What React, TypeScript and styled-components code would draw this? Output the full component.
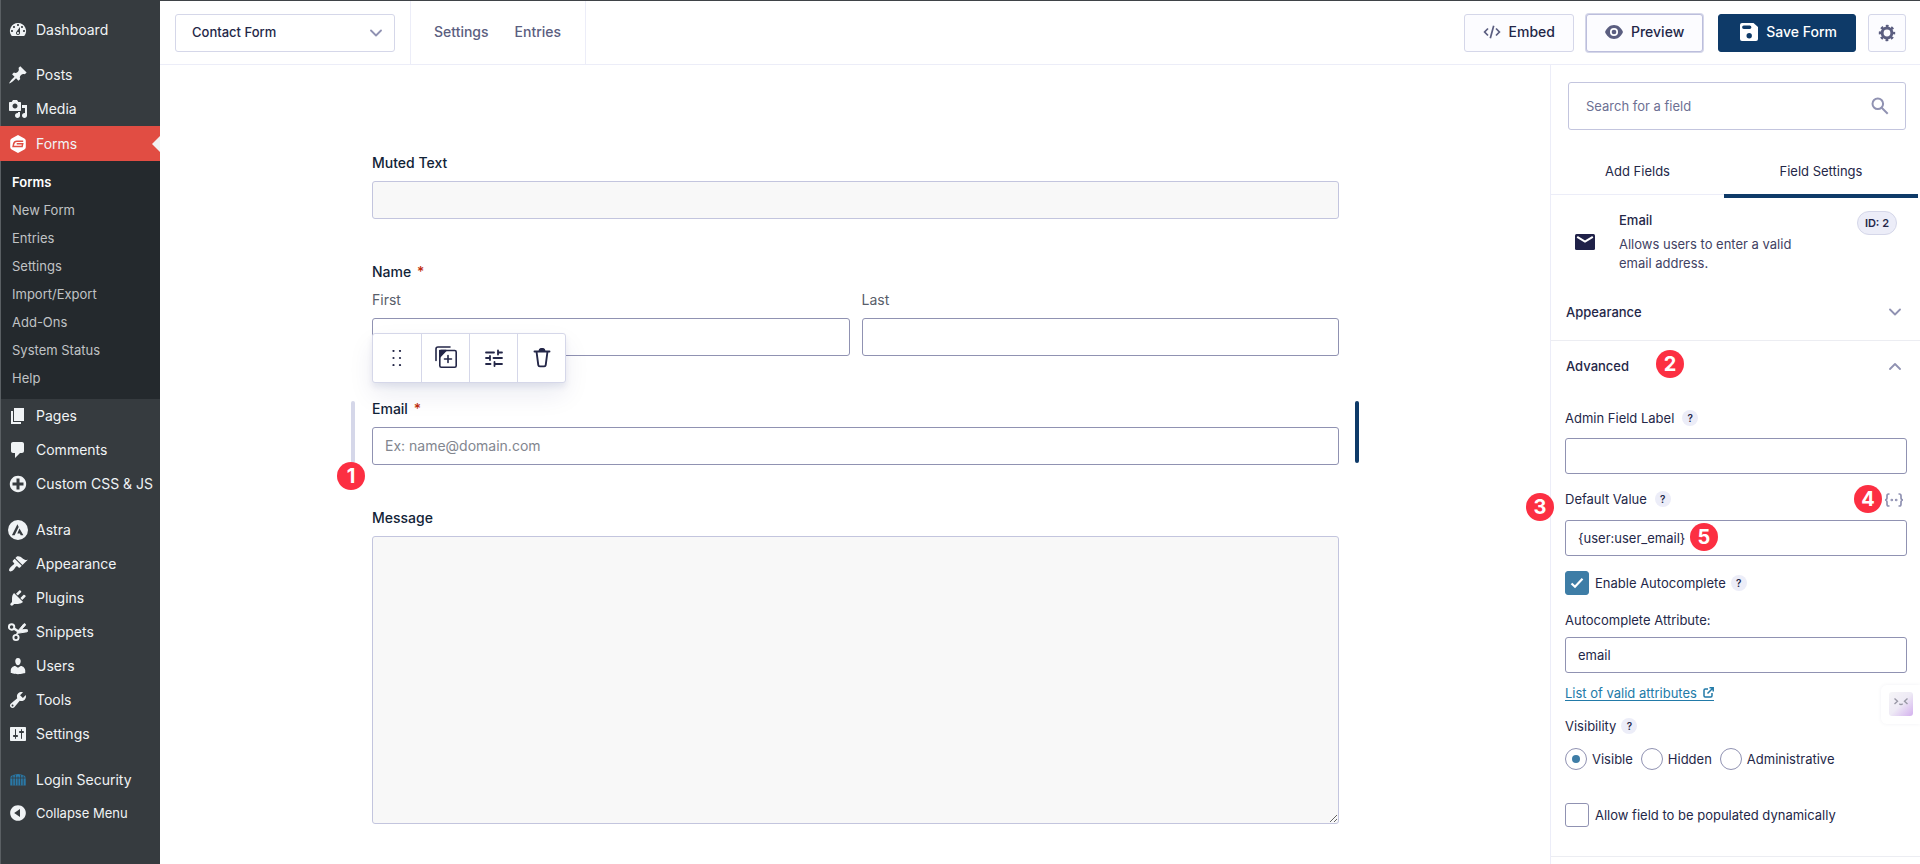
import React from 'react';
import styled, { createGlobalStyle, css } from 'styled-components';

const GlobalStyle = createGlobalStyle`
  *, *::before, *::after { box-sizing: border-box; }
  html, body { margin: 0; }
  body {
    background: #fff;
    color: #242748;
    font: 13px/20px Inter, "Liberation Sans", sans-serif;
  }
  button, input, select, textarea { font: inherit; color: inherit; margin: 0; }
  a { color: inherit; text-decoration: none; }
  h2, p, ul, fieldset { margin: 0; padding: 0; border: 0; }
  ul { list-style: none; }
  svg { display: block; flex: none; }
`;

const Shell = styled.div`
  display: grid;
  grid-template-columns: 160px minmax(0, 1fr);
  min-height: 100vh;
`;

/* ---------- admin menu ---------- */

const Menu = styled.nav`
  background: #363b3f;
  border-left: 1px solid #5a5f63;
  padding-top: 13px;
  color: #f0f3f5;
`;

const MenuGroup = styled.ul`
  margin-bottom: 12px;
  &:first-child { margin-bottom: 11px; }
`;

const MenuLink = styled.a<{ $active?: boolean }>`
  position: relative;
  display: flex;
  align-items: center;
  gap: 8px;
  height: 34px;
  padding-left: 7px;
  font-size: 14px;
  white-space: nowrap;
  ${(p) =>
    p.$active &&
    css`
      height: 35px;
      margin-left: -1px;
      padding-left: 8px;
      background: #e14d43;
      &::after {
        content: '';
        position: absolute;
        right: 0;
        top: 10px;
        border: 8px solid transparent;
        border-left: 0;
        border-right-color: #f1f1f1;
      }
    `}
`;

const CollapseButton = styled.button`
  display: flex;
  align-items: center;
  gap: 8px;
  height: 32px;
  padding: 0 0 0 7px;
  border: 0;
  background: none;
`;

const SubMenu = styled.ul`
  padding: 7px 0 7px 11px;
  background: #24292d;
`;

const SubLink = styled.a<{ $current?: boolean }>`
  display: block;
  line-height: 28px;
  color: ${(p) => (p.$current ? '#fff' : '#c0c3c5')};
  font-weight: ${(p) => (p.$current ? 600 : 400)};
`;

/* ---------- top bar ---------- */

const Main = styled.div`
  display: flex;
  flex-direction: column;
  min-width: 0;
`;

const TopBar = styled.header`
  display: flex;
  align-items: center;
  height: 65px;
  border-top: 1px solid #3f4347;
  border-bottom: 1px solid #ecedf8;
  padding: 0 14px 0 15px;
`;

const FormPicker = styled.div`
  position: relative;
  width: 220px;
  svg {
    position: absolute;
    right: 13px;
    top: 13px;
    pointer-events: none;
  }
`;

const PickerSelect = styled.select`
  appearance: none;
  display: block;
  width: 100%;
  height: 38px;
  padding: 0 32px 1px 16px;
  border: 1px solid #d5d7e9;
  border-radius: 3px;
  background: #fff;
  font-weight: 500;
`;

const TopLinks = styled.nav`
  display: flex;
  align-items: center;
  gap: 26px;
  align-self: stretch;
  margin-left: 15px;
  padding: 0 24px 1px 23px;
  border: solid #ecedf8;
  border-width: 0 1px;
  color: #5b5e80;
  font-size: 14px;
  font-weight: 500;
`;

const Actions = styled.div`
  display: flex;
  gap: 12px;
  margin-left: auto;
`;

const ActionButton = styled.button<{ $kind?: 'focus' | 'primary' }>`
  display: flex;
  align-items: center;
  justify-content: center;
  gap: 8px;
  min-width: 38px;
  height: 38px;
  padding: 0 18px 1px;
  border: 1px solid #d5d7e9;
  border-radius: 3px;
  background: #fcfcff;
  font-size: 14px;
  font-weight: 500;
  svg { color: #5b5e80; }
  ${(p) =>
    p.$kind === 'focus' &&
    css`
      border-color: #bcbedc;
      box-shadow: 0 0 0 1px #d5d7e9;
    `}
  ${(p) =>
    p.$kind === 'primary' &&
    css`
      gap: 7px;
      margin-left: 3px;
      padding: 0 18px 1px 20px;
      border-color: #0e3a68;
      background: #0e3a68;
      color: #fff;
      svg { color: #fff; }
    `}
`;

const GearButton = styled(ActionButton)`
  padding: 0;
`;

/* ---------- form canvas ---------- */

const Body = styled.div`
  display: flex;
  flex: 1;
`;

const Canvas = styled.main`
  flex: 1;
  min-width: 0;
  padding: 88px 1px 32px 2px;
`;

const FormFields = styled.form`
  display: flex;
  flex-direction: column;
  gap: 43px;
  width: 100%;
  max-width: 967px;
  margin: 0 auto;
`;

const Field = styled.div`
  position: relative;
  display: flex;
  flex-direction: column;
  gap: 8px;
`;

const FieldLabel = styled.label`
  font-size: 14px;
  font-weight: 500;
  color: #112337;
`;

const Required = styled.span`
  margin-left: 2px;
  color: #c02b0a;
`;

const SubLabel = styled.label`
  font-size: 14px;
  color: #585e6a;
`;

const NameColumns = styled.div`
  display: grid;
  grid-template-columns: 1fr 1fr;
  gap: 12px;
`;

const controlFrame = css`
  width: 100%;
  border: 1px solid #9092b2;
  border-radius: 3px;
  background: #fff;
  outline: 0;
`;

const TextInput = styled.input`
  ${controlFrame}
  height: 38px;
  padding: 0 12px 1px;
  font-size: 14px;
  &::placeholder { color: #82868f; opacity: 1; }
  &:disabled { background: #f8f8f8; border-color: #c3c5de; }
`;

const MessageBox = styled.textarea`
  ${controlFrame}
  display: block;
  height: 288px;
  background: #f8f8f8;
  border-color: #c3c5de;
`;

const SideBar = styled.span<{ $side: 'left' | 'right' }>`
  position: absolute;
  top: 2px;
  bottom: 2px;
  width: 4px;
  border-radius: 2px;
  ${(p) =>
    p.$side === 'left'
      ? css`
          left: -21px;
          background: #d5d7e9;
        `
      : css`
          right: -20px;
          background: #0e3a68;
        `}
`;

const FieldToolbar = styled.div`
  position: absolute;
  left: 0;
  top: -66px;
  display: flex;
  height: 50px;
  border: 1px solid #d5d7e9;
  border-radius: 3px;
  background: #fff;
  box-shadow: 0 4px 6px rgba(18, 25, 97, 0.08), 0 12px 26px rgba(18, 25, 97, 0.08);
`;

const ToolButton = styled.button`
  display: grid;
  place-items: center;
  width: 48px;
  padding: 0;
  border: 0;
  background: none;
  color: #242748;
  & + & { border-left: 1px solid #d5d7e9; }
`;

const Step = styled.span<{ $left?: number; $right?: number; $top: number }>`
  position: absolute;
  z-index: 2;
  top: ${(p) => p.$top}px;
  ${(p) => p.$left !== undefined && `left: ${p.$left}px;`}
  ${(p) => p.$right !== undefined && `right: ${p.$right}px;`}
  width: 28px;
  height: 28px;
  border-radius: 50%;
  background: #fc2f42;
  color: #fff;
  font-size: 20px;
  font-weight: 700;
  line-height: 28px;
  text-align: center;
`;

/* ---------- settings panel ---------- */

const Panel = styled.aside`
  width: 370px;
  border-left: 1px solid #ecedf8;
`;

const SearchBox = styled.div`
  position: relative;
  margin: 17px 14px 16px 17px;
  svg {
    position: absolute;
    right: 17px;
    top: 15px;
  }
`;

const SearchInput = styled.input`
  ${controlFrame}
  display: block;
  height: 48px;
  padding: 0 48px 1px 17px;
  border-color: #c3c5de;
  &::placeholder { color: #6d7093; opacity: 1; }
`;

const Tabs = styled.div`
  display: flex;
  align-items: flex-start;
  padding-right: 2px;
`;

const Tab = styled.button<{ $selected?: boolean }>`
  padding: 2px 0 0;
  border: 0;
  background: none;
  ${(p) =>
    p.$selected
      ? css`
          width: 194px;
          height: 52px;
          border-bottom: 4px solid #0e3a68;
        `
      : css`
          flex: 1;
          height: 49px;
          border-bottom: 1px solid #ecedf8;
        `}
`;

const FieldInfo = styled.div`
  display: flex;
  align-items: center;
  gap: 24px;
  padding: 12px 23px 14px 24px;
`;

const InfoText = styled.div`
  flex: 1;
  max-width: 190px;
`;

const InfoTitle = styled.h2`
  font-size: 13px;
  font-weight: 500;
`;

const InfoCopy = styled.p`
  margin-top: 5px;
  line-height: 19px;
  color: #3f4263;
`;

const IdBadge = styled.span`
  align-self: flex-start;
  margin: 1px 0 0 auto;
  padding: 0 7px;
  border: 1px solid #d5d7e9;
  border-radius: 12px;
  background: #ecedf8;
  font-size: 11px;
  font-weight: 600;
  line-height: 22px;
`;

const Section = styled.section`
  padding-bottom: 3px;
  border-bottom: 1px solid #ecedf2;
`;

const SectionButton = styled.button`
  position: relative;
  display: flex;
  align-items: center;
  justify-content: space-between;
  width: 100%;
  height: 50px;
  padding: 0 19px 0 15px;
  border: 0;
  background: none;
  font-weight: 500;
`;

const SectionBody = styled.div`
  padding: 17px 13px 26px 14px;
`;

const Setting = styled.div<{ $gap?: number }>`
  position: relative;
  display: flex;
  flex-direction: column;
  gap: ${(p) => p.$gap ?? 10}px;
  margin-bottom: 15px;
`;

const Row = styled.div<{ $space?: number }>`
  display: flex;
  align-items: center;
  gap: ${(p) => p.$space ?? 8}px;
`;

const SettingInput = styled.input`
  ${controlFrame}
  height: 36px;
  padding: 0 12px;
`;

const Help = styled.button`
  width: 16px;
  height: 16px;
  padding: 0;
  border: 0;
  border-radius: 50%;
  background: #ecedf8;
  font-size: 10px;
  font-weight: 600;
  line-height: 16px;
`;

const MergeTagButton = styled.button`
  margin-left: auto;
  padding: 2px 3px 0;
  border: 0;
  background: none;
  color: #9092b2;
`;

const Tick = styled.span`
  position: relative;
  display: block;
  width: 24px;
  height: 24px;
  margin-right: 1px;
  svg {
    position: absolute;
    left: 5px;
    top: 5px;
    color: #fff;
    pointer-events: none;
  }
`;

const TickInput = styled.input`
  appearance: none;
  display: block;
  width: 24px;
  height: 24px;
  border: 1px solid #9092b2;
  border-radius: 3px;
  background: #fff;
  &:checked { background: #3e7da6; border-color: #3e7da6; }
`;

const RadioInput = styled.input`
  appearance: none;
  display: grid;
  place-items: center;
  width: 22px;
  height: 22px;
  border: 1px solid #9092b2;
  border-radius: 50%;
  background: #fff;
  &:checked::before {
    content: '';
    width: 8px;
    height: 8px;
    border-radius: 50%;
    background: #3e7da6;
  }
`;

const RadioLabel = styled.label`
  display: flex;
  align-items: center;
  gap: 5px;
`;

const ValidLink = styled.a`
  display: inline-flex;
  align-items: center;
  gap: 6px;
  align-self: flex-start;
  height: 16px;
  margin-top: 5px;
  color: #227aa8;
  border-bottom: 1px solid #227aa8;
`;

const Visibility = styled.fieldset`
  display: flex;
  flex-direction: column;
  gap: 12px;
  margin-bottom: 33px;
`;

const Assistant = styled.button`
  position: fixed;
  right: 0;
  top: 685px;
  width: 39px;
  height: 39px;
  padding: 7px 7px 8px 8px;
  border: 0;
  border-radius: 6px 0 0 6px;
  background: #fff;
  box-shadow: 0 0 4px rgba(40, 40, 90, 0.06);
`;

/* ---------- icons ---------- */

const Dash = ({ d }: { d: string }) => (
  <svg width="20" height="20" viewBox="0 0 20 20" fill="currentColor" fillRule="evenodd" aria-hidden="true">
    <path d={d} />
  </svg>
);

const paths = {
  dashboard:
    'M3.76 16h12.48A7.998 7.998 0 0 0 10 3a7.998 7.998 0 0 0-6.24 13zM10 4c.55 0 1 .45 1 1s-.45 1-1 1-1-.45-1-1 .45-1 1-1zM6 6c.55 0 1 .45 1 1s-.45 1-1 1-1-.45-1-1 .45-1 1-1zm8 0c.55 0 1 .45 1 1s-.45 1-1 1-1-.45-1-1 .45-1 1-1zm-5.37 5.55L12 7v6c0 1.1-.9 2-2 2s-2-.9-2-2c0-.57.24-1.08.63-1.45zM4 10c.55 0 1 .45 1 1s-.45 1-1 1-1-.45-1-1 .45-1 1-1zm12 0c.55 0 1 .45 1 1s-.45 1-1 1-1-.45-1-1 .45-1 1-1zm-5 3c0-.55-.45-1-1-1s-1 .45-1 1 .45 1 1 1 1-.45 1-1z',
  posts:
    'M10.44 3.02l1.82-1.82 6.36 6.35-1.83 1.82c-1.05-.68-2.48-.57-3.41.36l-.75.75c-.92.93-1.04 2.35-.35 3.41l-1.83 1.82-2.41-2.41-2.8 2.79c-.42.42-3.38 2.71-3.8 2.29s1.86-3.39 2.28-3.81l2.79-2.79L4.1 9.36l1.83-1.82c1.05.69 2.48.57 3.4-.36l.75-.75c.93-.92 1.05-2.35.36-3.41z',
  media:
    'M13 11V4c0-.55-.45-1-1-1h-1.67L9 1H5L3.67 3H2c-.55 0-1 .45-1 1v7c0 .55.45 1 1 1h10c.55 0 1-.45 1-1zM7 4.5c1.38 0 2.5 1.12 2.5 2.5S8.38 9.5 7 9.5 4.5 8.38 4.5 7 5.62 4.5 7 4.5zM14 6h5v10.5c0 1.38-1.12 2.5-2.5 2.5S14 17.88 14 16.5s1.12-2.5 2.5-2.5c.17 0 .34.02.5.05V9h-3V6zm-4 8.05V13h2v3.5c0 1.38-1.12 2.5-2.5 2.5S7 17.88 7 16.5 8.12 14 9.5 14c.17 0 .34.02.5.05z',
  pages: 'M6 15V2h10v13H6zm-1 1h8v2H3V5h2v11z',
  comments: 'M5 2h9c1.1 0 2 .9 2 2v7c0 1.1-.9 2-2 2h-2l-5 5v-5H5c-1.1 0-2-.9-2-2V4c0-1.1.9-2 2-2z',
  plus: 'M15.8 4.2c3.2 3.21 3.2 8.39 0 11.6-3.21 3.2-8.39 3.2-11.6 0C1 12.59 1 7.41 4.2 4.2 7.41 1 12.59 1 15.8 4.2zm-4.3 11.3v-4h4v-3h-4v-4h-3v4h-4v3h4v4h3z',
  astra:
    'M10 0a10 10 0 1 0 0 20 10 10 0 0 0 0-20zM9.4 4.2l1.3 2.7-4.1 8.4H3.9zM11.5 8.5l3.9 6.8h-2.7l-.8-1.8H9.3z',
  appearance:
    'M14.48 11.06L7.41 3.99l1.5-1.5c.5-.56 2.3-.47 3.51.32 1.21.8 1.43 1.28 2.91 2.1 1.18.64 2.45 1.26 4.45.85zm-.71.71L6.7 4.7 4.93 6.47c-.39.39-.39 1.02 0 1.41l1.06 1.06c.39.39.39 1.03 0 1.42-.6.6-1.43 1.11-2.21 1.69-.35.26-.7.53-1.01.84C1.43 14.23.4 16.08 1.4 17.07c.99 1 2.84-.03 4.18-1.36.31-.31.58-.66.85-1.02.57-.78 1.08-1.61 1.69-2.21.39-.39 1.02-.39 1.41 0l1.06 1.06c.39.39 1.02.39 1.41 0z',
  plugins:
    'M13.11 4.36L9.87 7.6 8 5.73l3.24-3.24c.35-.34 1.05-.2 1.56.32.52.51.66 1.21.31 1.55zm-8 1.77l.91-1.12 9.01 9.01-1.19.84c-.71.71-2.63 1.16-3.82 1.16H6.14L4.9 17.26c-.59.59-1.54.59-2.12 0-.59-.58-.59-1.53 0-2.12l1.24-1.24v-3.88c0-1.13.4-3.19 1.09-3.89zm7.26 3.97l3.24-3.24c.34-.35 1.04-.21 1.55.31.52.51.66 1.21.31 1.55l-3.24 3.25z',
  users:
    'M10 9.25c-2.27 0-2.73-3.44-2.73-3.44C7 4.02 7.82 2 9.97 2c2.16 0 2.98 2.02 2.71 3.81 0 0-.41 3.44-2.68 3.44zm0 2.57L12.72 10c2.39 0 4.52 2.33 4.52 4.53v2.49s-3.65 1.13-7.24 1.13c-3.65 0-7.24-1.13-7.24-1.13v-2.49c0-2.25 1.94-4.48 4.47-4.48z',
  tools:
    'M16.68 9.77c-1.34 1.34-3.3 1.67-4.95.99l-5.41 6.52c-.99.99-2.59.99-3.58 0s-.99-2.59 0-3.57l6.52-5.42c-.68-1.65-.35-3.61.99-4.95 1.28-1.28 3.12-1.62 4.72-1.06l-2.89 2.89 2.82 2.82 2.86-2.87c.53 1.58.18 3.39-1.08 4.65zM3.81 16.21c.4.39 1.04.39 1.43 0 .4-.4.4-1.04 0-1.43-.39-.4-1.03-.4-1.43 0-.39.39-.39 1.03 0 1.43z',
  settings:
    'M18 16V4c0-.55-.45-1-1-1H3c-.55 0-1 .45-1 1v12c0 .55.45 1 1 1h14c.55 0 1-.45 1-1zM8 11h1c.55 0 1 .45 1 1s-.45 1-1 1H8v1.5c0 .28-.22.5-.5.5s-.5-.22-.5-.5V13H6c-.55 0-1-.45-1-1s.45-1 1-1h1V5.5c0-.28.22-.5.5-.5s.5.22.5.5V11zm5-2h-1c-.55 0-1-.45-1-1s.45-1 1-1h1V5.5c0-.28.22-.5.5-.5s.5.22.5.5V7h1c.55 0 1 .45 1 1s-.45 1-1 1h-1v5.5c0 .28-.22.5-.5.5s-.5-.22-.5-.5V9z',
  collapse:
    'M10 2.16c4.33 0 7.84 3.51 7.84 7.84s-3.51 7.84-7.84 7.84S2.16 14.33 2.16 10 5.67 2.16 10 2.16zm2 11.72V6.12L6.18 9.97z',
};

const FormsIcon = () => (
  <svg width="20" height="20" viewBox="0 0 20 20" aria-hidden="true">
    <path d="M10 1l6.4 3.4a2.6 2.6 0 0 1 1.4 2.3v6.6a2.6 2.6 0 0 1-1.4 2.3L10 19l-6.4-3.4a2.6 2.6 0 0 1-1.4-2.3V6.7a2.6 2.6 0 0 1 1.4-2.3z" fill="#fff" />
    <path d="M15.2 7.2H8.8c-1.700 0-2.700.9-3.100 2.500l-.6 2.900h9l.6-2.800H8.700" fill="none" stroke="#e14d43" strokeWidth="1.500" />
  </svg>
);

const ScissorsIcon = () => (
  <svg width="20" height="20" viewBox="0 0 20 20" fill="none" stroke="currentColor" aria-hidden="true">
    <circle cx="3.600" cy="5" r="2.700" strokeWidth="1.900" />
    <circle cx="8" cy="15.500" r="2.600" strokeWidth="1.900" />
    <path d="M6 6.500l4.500 3" strokeWidth="2.600" />
    <path d="M8.500 12.500l1.200-3.200 6-7.300c1-.9 2.300.1 1.700 1.200l-4.200 4.600 5.600-.2c1.300.1 1.300 1.900.2 2.200l-8.300 1.300z" fill="currentColor" strokeWidth="1" />
  </svg>
);

const LoginIcon = () => (
  <svg width="20" height="20" viewBox="0 0 20 20" aria-hidden="true">
    <path d="M2.300 15.500V8C2.300 6 4 5.200 6 4.800L10 4l4 .8c2 .4 3.700 1.200 3.700 3.200v7.500z" fill="#2a79a8" />
    <path d="M4.800 5.500v10M7.400 5v10.500M10 6.500v9M12.600 5v10.500M15.200 5.500v10M2.300 8h15.400" stroke="#363b3f" strokeWidth=".8" />
  </svg>
);

const Chevron = ({ up }: { up?: boolean }) => (
  <svg width="12" height="12" viewBox="0 0 12 12" fill="none" stroke="#9092b2" strokeWidth="1.800" strokeLinecap="round" strokeLinejoin="round" aria-hidden="true">
    <path d={up ? 'M1 9l5-5 5 5' : 'M1 3.500l5 5 5-5'} />
  </svg>
);

const CodeIcon = () => (
  <svg width="18" height="14" viewBox="0 0 18 14" fill="none" stroke="currentColor" strokeWidth="1.700" aria-hidden="true">
    <path d="M5 3.500L1.600 7 5 10.500M13 3.500L16.400 7 13 10.500M10.700 .8L7.300 13.200" />
  </svg>
);

const EyeIcon = () => (
  <svg width="18" height="14" viewBox="0 0 18 14" aria-hidden="true">
    <path d="M9 0c4 0 7.300 2.800 9 7-1.700 4.200-5 7-9 7S1.700 11.200 0 7c1.700-4.200 5-7 9-7z" fill="currentColor" />
    <circle cx="9" cy="7" r="3.200" fill="none" stroke="#fff" strokeWidth="1.700" />
  </svg>
);

const SaveIcon = () => (
  <svg width="20" height="20" viewBox="0 0 20 20" fillRule="evenodd" fill="currentColor" aria-hidden="true">
    <path d="M3 1h11.500L19 5v12a2 2 0 0 1-2 2H3a2 2 0 0 1-2-2V3a2 2 0 0 1 2-2zm1.800 2.500a1.500 1.500 0 0 0 0 3.400h5.900a1.500 1.500 0 0 0 0-3.400zM10.200 11a2.700 2.700 0 1 0 0 5.400 2.700 2.700 0 0 0 0-5.400z" />
  </svg>
);

const GearIcon = () => (
  <svg width="18" height="18" viewBox="0 0 18 18" fill="none" stroke="currentColor" aria-hidden="true">
    <circle cx="9" cy="9" r="4.900" strokeWidth="3" />
    <circle cx="9" cy="9" r="7" strokeWidth="2.400" strokeDasharray="2.750 2.748" strokeDashoffset="1.370" />
  </svg>
);

const SearchIcon = () => (
  <svg width="18" height="18" viewBox="0 0 18 18" fill="none" stroke="#9092b2" strokeWidth="2" aria-hidden="true">
    <circle cx="6.800" cy="6.800" r="5.300" />
    <path d="M10.700 10.700l6 6" />
  </svg>
);

const MailIcon = () => (
  <svg width="20" height="16" viewBox="0 0 20 16" aria-hidden="true">
    <rect width="20" height="16" rx="1.500" fill="#1f2148" />
    <path d="M2.200 2.800L10 7.600l7.800-4.800" fill="none" stroke="#fff" strokeWidth="2" />
  </svg>
);

const DragIcon = () => (
  <svg width="10" height="16" viewBox="0 0 10 16" fill="currentColor" aria-hidden="true">
    {[1.5, 8].map((x) => [1, 8, 15].map((y) => <circle key={`${x}-${y}`} cx={x} cy={y} r="1.1" />))}
  </svg>
);

const DuplicateIcon = () => (
  <svg width="22" height="24" viewBox="0 0 22 24" fill="none" stroke="currentColor" strokeWidth="1.600" strokeLinejoin="round" strokeLinecap="round" aria-hidden="true">
    <path d="M1 14.500V3a2 2 0 0 1 2-2h12" />
    <rect x="4.800" y="4.500" width="16.400" height="16.800" rx="1.500" />
    <path d="M4.800 11V4.500H11z" fill="currentColor" />
    <path d="M13 9.500v7M9.500 13h7" />
  </svg>
);

const SlidersIcon = () => (
  <svg width="18" height="18" viewBox="0 0 18 18" fill="none" stroke="currentColor" strokeWidth="1.800" strokeLinecap="round" aria-hidden="true">
    <path d="M1 3.500h8M13 3.500h4M13 1.500v4M1 9h3.500M8.500 9H17M5 7v4M1 15h4.500M9.500 15H17M9.500 13v4" />
  </svg>
);

const TrashIcon = () => (
  <svg width="18" height="20" viewBox="0 0 18 20" fill="none" stroke="currentColor" strokeWidth="1.900" strokeLinecap="round" strokeLinejoin="round" aria-hidden="true">
    <path d="M1.500 3.500h15M3.500 3.500l1.800 13.600a1.500 1.500 0 0 0 1.500 1.300h4.400a1.500 1.500 0 0 0 1.500-1.300l1.800-13.600" />
    <path d="M6.500 3a2.500 2.200 0 0 1 5 0z" fill="currentColor" />
  </svg>
);

const CheckIcon = () => (
  <svg width="14" height="14" viewBox="0 0 14 14" fill="none" stroke="currentColor" strokeWidth="2.200" aria-hidden="true">
    <path d="M1.500 7.500l3.500 3.300 7.500-8" />
  </svg>
);

const BracesIcon = () => (
  <svg width="20" height="14" viewBox="0 0 20 14" fill="none" stroke="currentColor" strokeWidth="1.700" aria-hidden="true">
    <path d="M5.500 1H4.600C3.400 1 3 1.700 3 2.700v2.100C3 6.200 2.300 7 1 7c1.300 0 2 .8 2 2.200v2.100c0 1 .4 1.700 1.600 1.700h.9M14.500 1h.9c1.200 0 1.600.7 1.600 1.700v2.100c0 1.400.7 2.200 2 2.200-1.300 0-2 .8-2 2.200v2.100c0 1-.4 1.700-1.600 1.700h-.9" />
    <circle cx="7.800" cy="7" r=".5" />
    <circle cx="12.200" cy="7" r=".5" />
  </svg>
);

const ExternalIcon = () => (
  <svg width="11" height="11" viewBox="0 0 11 11" fill="none" stroke="currentColor" strokeWidth="1.500" aria-hidden="true">
    <path d="M5 2H2.200C1.500 2 1 2.500 1 3.200v5.600c0 .7.500 1.200 1.200 1.200h5.600c.7 0 1.200-.5 1.200-1.200V6M6.500 .8h3.700v3.700M10 1L4.500 6.500" />
  </svg>
);

const AssistantIcon = () => (
  <svg width="24" height="24" viewBox="0 0 24 24" aria-hidden="true">
    <defs>
      <linearGradient id="assistant" x1="0" y1="0" x2="1" y2="1">
        <stop offset="0" stopColor="#f5f5f7" />
        <stop offset=".5" stopColor="#eeeaf5" />
        <stop offset="1" stopColor="#d3b0ee" />
      </linearGradient>
    </defs>
    <rect width="24" height="24" rx="3" fill="url(#assistant)" />
    <path d="M5.500 6.500l3 2.700-3 2.700M18.500 6.500l-3 2.700 3 2.700M10.300 11.800q1.700 1.400 3.400 0" fill="none" stroke="#9a99a6" strokeWidth="1.400" />
  </svg>
);

/* ---------- data ---------- */

type Item = { label: string; icon: React.ReactNode };

const contentItems: Item[] = [
  { label: 'Posts', icon: <Dash d={paths.posts} /> },
  { label: 'Media', icon: <Dash d={paths.media} /> },
];

const formLinks = ['Forms', 'New Form', 'Entries', 'Settings', 'Import/Export', 'Add-Ons', 'System Status', 'Help'];

const pageItems: Item[] = [
  { label: 'Pages', icon: <Dash d={paths.pages} /> },
  { label: 'Comments', icon: <Dash d={paths.comments} /> },
  { label: 'Custom CSS & JS', icon: <Dash d={paths.plus} /> },
];

const siteItems: Item[] = [
  { label: 'Astra', icon: <Dash d={paths.astra} /> },
  { label: 'Appearance', icon: <Dash d={paths.appearance} /> },
  { label: 'Plugins', icon: <Dash d={paths.plugins} /> },
  { label: 'Snippets', icon: <ScissorsIcon /> },
  { label: 'Users', icon: <Dash d={paths.users} /> },
  { label: 'Tools', icon: <Dash d={paths.tools} /> },
  { label: 'Settings', icon: <Dash d={paths.settings} /> },
];

const MenuItems = ({ items }: { items: Item[] }) => (
  <>
    {items.map((item) => (
      <li key={item.label}>
        <MenuLink href="#">
          {item.icon}
          {item.label}
        </MenuLink>
      </li>
    ))}
  </>
);

const HelpTip = ({ topic }: { topic: string }) => (
  <Help type="button" aria-label={`Help: ${topic}`}>
    ?
  </Help>
);

export default function App() {
  return (
    <>
      <GlobalStyle />
      <Shell>
        <Menu aria-label="Admin menu">
          <MenuGroup>
            <MenuItems items={[{ label: 'Dashboard', icon: <Dash d={paths.dashboard} /> }]} />
          </MenuGroup>
          <MenuGroup>
            <MenuItems items={contentItems} />
            <li>
              <MenuLink href="#" $active>
                <FormsIcon />
                Forms
              </MenuLink>
              <SubMenu>
                {formLinks.map((label, i) => (
                  <li key={label}>
                    <SubLink href="#" $current={i === 0}>
                      {label}
                    </SubLink>
                  </li>
                ))}
              </SubMenu>
            </li>
            <MenuItems items={pageItems} />
          </MenuGroup>
          <MenuGroup>
            <MenuItems items={siteItems} />
          </MenuGroup>
          <MenuGroup>
            <MenuItems items={[{ label: 'Login Security', icon: <LoginIcon /> }]} />
            <li>
              <CollapseButton type="button">
                <Dash d={paths.collapse} />
                Collapse Menu
              </CollapseButton>
            </li>
          </MenuGroup>
        </Menu>

        <Main>
          <TopBar>
            <FormPicker>
              <PickerSelect aria-label="Form" defaultValue="contact">
                <option value="contact">Contact Form</option>
              </PickerSelect>
              <Chevron />
            </FormPicker>
            <TopLinks aria-label="Form pages">
              <a href="#">Settings</a>
              <a href="#">Entries</a>
            </TopLinks>
            <Actions>
              <ActionButton type="button">
                <CodeIcon />
                Embed
              </ActionButton>
              <ActionButton type="button" $kind="focus">
                <EyeIcon />
                Preview
              </ActionButton>
              <ActionButton type="button" $kind="primary">
                <SaveIcon />
                Save Form
              </ActionButton>
              <GearButton type="button" aria-label="Editor preferences">
                <GearIcon />
              </GearButton>
            </Actions>
          </TopBar>

          <Body>
            <Canvas>
              <FormFields>
                <Field>
                  <FieldLabel htmlFor="muted">Muted Text</FieldLabel>
                  <TextInput id="muted" disabled />
                </Field>

                <Field role="group" aria-labelledby="name-label">
                  <FieldLabel as="span" id="name-label">
                    Name <Required>*</Required>
                  </FieldLabel>
                  <NameColumns>
                    <Field>
                      <SubLabel htmlFor="first">First</SubLabel>
                      <TextInput id="first" />
                    </Field>
                    <Field>
                      <SubLabel htmlFor="last">Last</SubLabel>
                      <TextInput id="last" />
                    </Field>
                  </NameColumns>
                </Field>

                <Field>
                  <SideBar $side="left" />
                  <SideBar $side="right" />
                  <FieldToolbar role="toolbar" aria-label="Field actions">
                    <ToolButton type="button" aria-label="Move">
                      <DragIcon />
                    </ToolButton>
                    <ToolButton type="button" aria-label="Duplicate">
                      <DuplicateIcon />
                    </ToolButton>
                    <ToolButton type="button" aria-label="Field settings">
                      <SlidersIcon />
                    </ToolButton>
                    <ToolButton type="button" aria-label="Delete">
                      <TrashIcon />
                    </ToolButton>
                  </FieldToolbar>
                  <FieldLabel htmlFor="email">
                    Email <Required>*</Required>
                  </FieldLabel>
                  <TextInput id="email" type="email" placeholder="Ex: name@domain.com" />
                  <Step $left={-35} $top={63}>1</Step>
                </Field>

                <Field>
                  <FieldLabel htmlFor="message">Message</FieldLabel>
                  <MessageBox id="message" />
                </Field>
              </FormFields>
            </Canvas>

            <Panel aria-label="Field settings">
              <SearchBox>
                <SearchInput aria-label="Search for a field" placeholder="Search for a field" />
                <SearchIcon />
              </SearchBox>
              <Tabs role="tablist">
                <Tab type="button" role="tab" aria-selected={false}>
                  Add Fields
                </Tab>
                <Tab type="button" role="tab" aria-selected $selected>
                  Field Settings
                </Tab>
              </Tabs>

              <FieldInfo>
                <MailIcon />
                <InfoText>
                  <InfoTitle>Email</InfoTitle>
                  <InfoCopy>Allows users to enter a valid email address.</InfoCopy>
                </InfoText>
                <IdBadge>ID: 2</IdBadge>
              </FieldInfo>

              <Section>
                <SectionButton type="button" aria-expanded={false}>
                  Appearance
                  <Chevron />
                </SectionButton>
              </Section>

              <Section>
                <SectionButton type="button" aria-expanded>
                  Advanced
                  <Step $left={105} $top={9}>2</Step>
                  <Chevron up />
                </SectionButton>
                <SectionBody>
                  <Setting>
                    <Row>
                      <label htmlFor="admin-label">Admin Field Label</label>
                      <HelpTip topic="Admin Field Label" />
                    </Row>
                    <SettingInput id="admin-label" />
                  </Setting>

                  <Setting $gap={11}>
                    <Row>
                      <label htmlFor="default-value">Default Value</label>
                      <HelpTip topic="Default Value" />
                      <MergeTagButton type="button" aria-label="Insert merge tag">
                        <BracesIcon />
                      </MergeTagButton>
                    </Row>
                    <SettingInput id="default-value" defaultValue="{user:user_email}" />
                    <Step $left={-39} $top={4}>3</Step>
                    <Step $right={25} $top={-4}>4</Step>
                    <Step $left={125} $top={34}>5</Step>
                  </Setting>

                  <Setting>
                    <Row $space={5}>
                      <Tick>
                        <TickInput type="checkbox" id="autocomplete" defaultChecked />
                        <CheckIcon />
                      </Tick>
                      <label htmlFor="autocomplete">Enable Autocomplete</label>
                      <HelpTip topic="Enable Autocomplete" />
                    </Row>
                  </Setting>

                  <Setting $gap={7}>
                    <label htmlFor="attribute">Autocomplete Attribute:</label>
                    <SettingInput id="attribute" defaultValue="email" />
                    <ValidLink href="#">
                      List of valid attributes
                      <ExternalIcon />
                    </ValidLink>
                  </Setting>

                  <Visibility aria-label="Visibility">
                    <Row $space={5}>
                      <span>Visibility</span>
                      <HelpTip topic="Visibility" />
                    </Row>
                    <Row>
                      <RadioLabel>
                        <RadioInput type="radio" name="visibility" defaultChecked />
                        Visible
                      </RadioLabel>
                      <RadioLabel>
                        <RadioInput type="radio" name="visibility" />
                        Hidden
                      </RadioLabel>
                      <RadioLabel>
                        <RadioInput type="radio" name="visibility" />
                        Administrative
                      </RadioLabel>
                    </Row>
                  </Visibility>

                  <Row $space={5}>
                    <Tick>
                      <TickInput type="checkbox" id="dynamic" />
                    </Tick>
                    <label htmlFor="dynamic">Allow field to be populated dynamically</label>
                  </Row>
                </SectionBody>
              </Section>
            </Panel>
          </Body>
        </Main>
      </Shell>
      <Assistant type="button" aria-label="Open assistant">
        <AssistantIcon />
      </Assistant>
    </>
  );
}
